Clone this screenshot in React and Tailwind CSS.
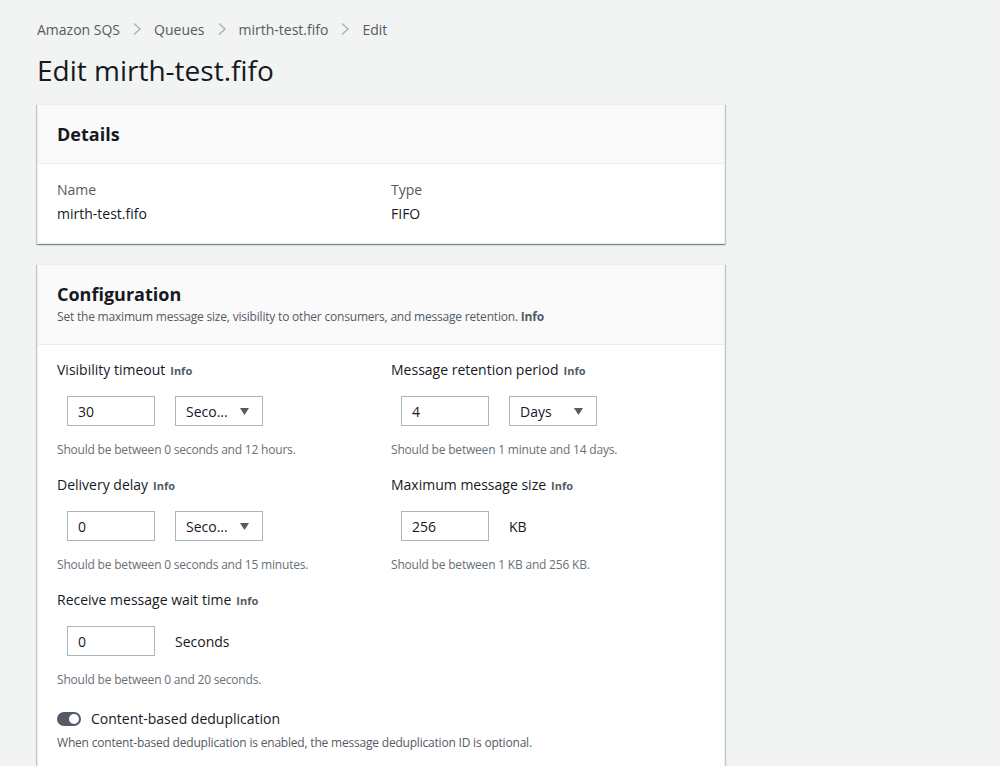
const font = { fontFamily: '"Open Sans", "Noto Sans", Arial, sans-serif' };

function Chevron() {
  return (
    <svg width="10" height="14" viewBox="0 0 10 14" className="mx-[12px]">
      <path d="M2 1.5 L8 7 L2 12.5" fill="none" stroke="#aab7b8" strokeWidth="1.5" />
    </svg>
  );
}

function Info() {
  return <span className="ml-[5px] text-[11px] font-bold text-[#545b64]">Info</span>;
}

function TextInput({ value }) {
  return (
    <div className="w-[88px] h-[30px] border border-[#aab7b8] bg-white flex items-center px-[10px] text-[14px] text-[#16191f]">
      {value}
    </div>
  );
}

function Select({ value }) {
  return (
    <div className="w-[88px] h-[30px] border border-[#aab7b8] bg-white flex items-center justify-between pl-[10px] pr-[13px] text-[14px] text-[#16191f]">
      <span>{value}</span>
      <svg width="9" height="7" viewBox="0 0 9 7">
        <path d="M0 0 H9 L4.5 7 Z" fill="#545b64" />
      </svg>
    </div>
  );
}

function Field({ label, children, hint }) {
  return (
    <div className="h-[115px]">
      <div className="text-[14px] text-[#16191f] leading-[20px] flex items-baseline">
        {label}
        <Info />
      </div>
      <div className="mt-[15px] ml-[10px] flex items-center gap-[20px]">{children}</div>
      <div className="mt-[15px] text-[12px] tracking-[-0.2px] text-[#687078]">{hint}</div>
    </div>
  );
}

const card =
  'w-[688px] bg-white border border-[#eaeded] shadow-[0_1px_1px_0_rgba(0,28,36,0.3),1px_1px_1px_0_rgba(0,28,36,0.15),-1px_1px_1px_0_rgba(0,28,36,0.15)]';

export default function App() {
  return (
    <div className="min-h-[766px] bg-[#f2f3f3] px-[37px] pt-[18px]" style={font}>
      <nav className="flex items-center text-[14px] text-[#545b64] h-[22px]">
        <span>Amazon SQS</span>
        <Chevron />
        <span>Queues</span>
        <Chevron />
        <span>mirth-test.fifo</span>
        <Chevron />
        <span>Edit</span>
      </nav>
      <h1 className="mt-[10px] text-[28px] leading-[40px] text-[#16191f]">Edit mirth-test.fifo</h1>

      <div className={`mt-[14px] ${card}`}>
        <div className="h-[59px] bg-[#fafafa] border-b border-[#eaeded] px-[19px] flex items-center">
          <h2 className="text-[18px] font-bold text-[#16191f]">Details</h2>
        </div>
        <div className="px-[19px] pt-[15px] pb-[18px] grid grid-cols-2 gap-x-[20px]">
          <div>
            <div className="text-[14px] text-[#545b64] leading-[22px]">Name</div>
            <div className="text-[14px] text-[#16191f] leading-[22px] mt-[2px]">mirth-test.fifo</div>
          </div>
          <div>
            <div className="text-[14px] text-[#545b64] leading-[22px]">Type</div>
            <div className="text-[14px] text-[#16191f] leading-[22px] mt-[2px]">FIFO</div>
          </div>
        </div>
      </div>

      <div className={`mt-[20px] ${card}`}>
        <div className="h-[80px] bg-[#fafafa] border-b border-[#eaeded] px-[19px] pt-[17px]">
          <h2 className="text-[18px] leading-[24px] font-bold text-[#16191f]">Configuration</h2>
          <p className="mt-[2px] text-[12px] tracking-[-0.2px] text-[#545b64]">
            Set the maximum message size, visibility to other consumers, and message retention.{' '}
            <span className="font-bold">Info</span>
          </p>
        </div>
        <div className="px-[19px] pt-[15px] grid grid-cols-2 gap-x-[20px]">
          <div>
            <Field label="Visibility timeout" hint="Should be between 0 seconds and 12 hours.">
              <TextInput value="30" />
              <Select value="Seco..." />
            </Field>
            <Field label="Delivery delay" hint="Should be between 0 seconds and 15 minutes.">
              <TextInput value="0" />
              <Select value="Seco..." />
            </Field>
            <Field label="Receive message wait time" hint="Should be between 0 and 20 seconds.">
              <TextInput value="0" />
              <span className="text-[14px] text-[#16191f]">Seconds</span>
            </Field>
          </div>
          <div>
            <Field label="Message retention period" hint="Should be between 1 minute and 14 days.">
              <TextInput value="4" />
              <Select value="Days" />
            </Field>
            <Field label="Maximum message size" hint="Should be between 1 KB and 256 KB.">
              <TextInput value="256" />
              <span className="text-[14px] text-[#16191f]">KB</span>
            </Field>
          </div>
        </div>
        <div className="px-[19px] pt-[3px] pb-[20px]">
          <div className="flex items-center gap-[10px]">
            <div className="w-[24px] h-[14px] rounded-full bg-[#545b64] flex items-center justify-end pr-[2px]">
              <div className="w-[10px] h-[10px] rounded-full bg-white" />
            </div>
            <span className="text-[14px] text-[#16191f]">Content-based deduplication</span>
          </div>
          <div className="mt-[5px] text-[12px] tracking-[-0.2px] text-[#545b64]">
            When content-based deduplication is enabled, the message deduplication ID is optional.
          </div>
        </div>
      </div>
    </div>
  );
}
